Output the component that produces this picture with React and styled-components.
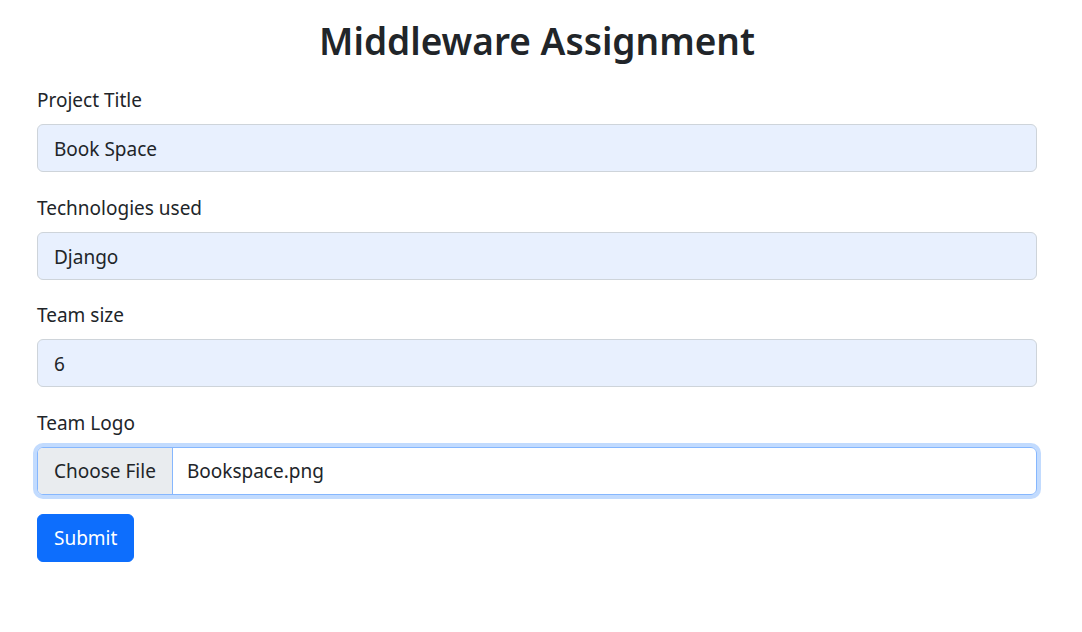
import React from "react";
import styled, { createGlobalStyle } from "styled-components";

const GlobalStyle = createGlobalStyle`
  body {
    margin: 0;
    background: #fff;
    color: #212529;
    font-family: "Noto Sans", "Open Sans", sans-serif;
  }
`;

const Page = styled.div`
  width: 1000px;
  padding: 17px 0 0 37px;
`;

const Title = styled.h1`
  margin: 0 0 20px;
  font-size: 37px;
  font-weight: 600;
  line-height: 48px;
  text-align: center;
`;

const Form = styled.form`
  display: flex;
  flex-direction: column;
`;

const Group = styled.div`
  display: flex;
  flex-direction: column;
  margin-bottom: ${(p) => (p.last ? "19px" : "20.5px")};
`;

const Label = styled.label`
  font-size: 19px;
  line-height: 30px;
  margin-bottom: 9px;
`;

const TextInput = styled.input`
  box-sizing: border-box;
  height: 48px;
  padding: 9px 16px 7px;
  font-family: inherit;
  font-size: 19px;
  line-height: 30px;
  color: #212529;
  background: #e8f0fe;
  border: 1px solid #ced4da;
  border-radius: 6px;
  outline: none;
`;

const FileField = styled.div`
  box-sizing: border-box;
  display: flex;
  height: 48px;
  border: 1px solid #86b7fe;
  border-radius: 6px;
  box-shadow: 0 0 0 4px rgba(13, 110, 253, 0.25);
  overflow: hidden;
  font-size: 19px;
  line-height: 30px;
`;

const FileButton = styled.span`
  display: flex;
  align-items: center;
  padding: 1px 16px 0;
  background: #e9ecef;
  border-right: 1px solid #86b7fe;
`;

const FileName = styled.span`
  display: flex;
  align-items: center;
  padding: 1px 14px 0;
`;

const SubmitButton = styled.button`
  align-self: flex-start;
  height: 48px;
  padding: 1px 16px 0;
  font-family: inherit;
  font-size: 19px;
  color: #fff;
  background: #0d6efd;
  border: 1px solid #0d6efd;
  border-radius: 6px;
`;

const fields = [
  { label: "Project Title", value: "Book Space" },
  { label: "Technologies used", value: "Django" },
  { label: "Team size", value: "6" },
];

export default function App() {
  return (
    <>
      <GlobalStyle />
      <Page>
        <Title>Middleware Assignment</Title>
        <Form onSubmit={(e) => e.preventDefault()}>
          {fields.map((f) => (
            <Group key={f.label}>
              <Label>{f.label}</Label>
              <TextInput defaultValue={f.value} readOnly />
            </Group>
          ))}
          <Group last>
            <Label>Team Logo</Label>
            <FileField>
              <FileButton>Choose File</FileButton>
              <FileName>Bookspace.png</FileName>
            </FileField>
          </Group>
          <SubmitButton type="submit">Submit</SubmitButton>
        </Form>
      </Page>
    </>
  );
}
